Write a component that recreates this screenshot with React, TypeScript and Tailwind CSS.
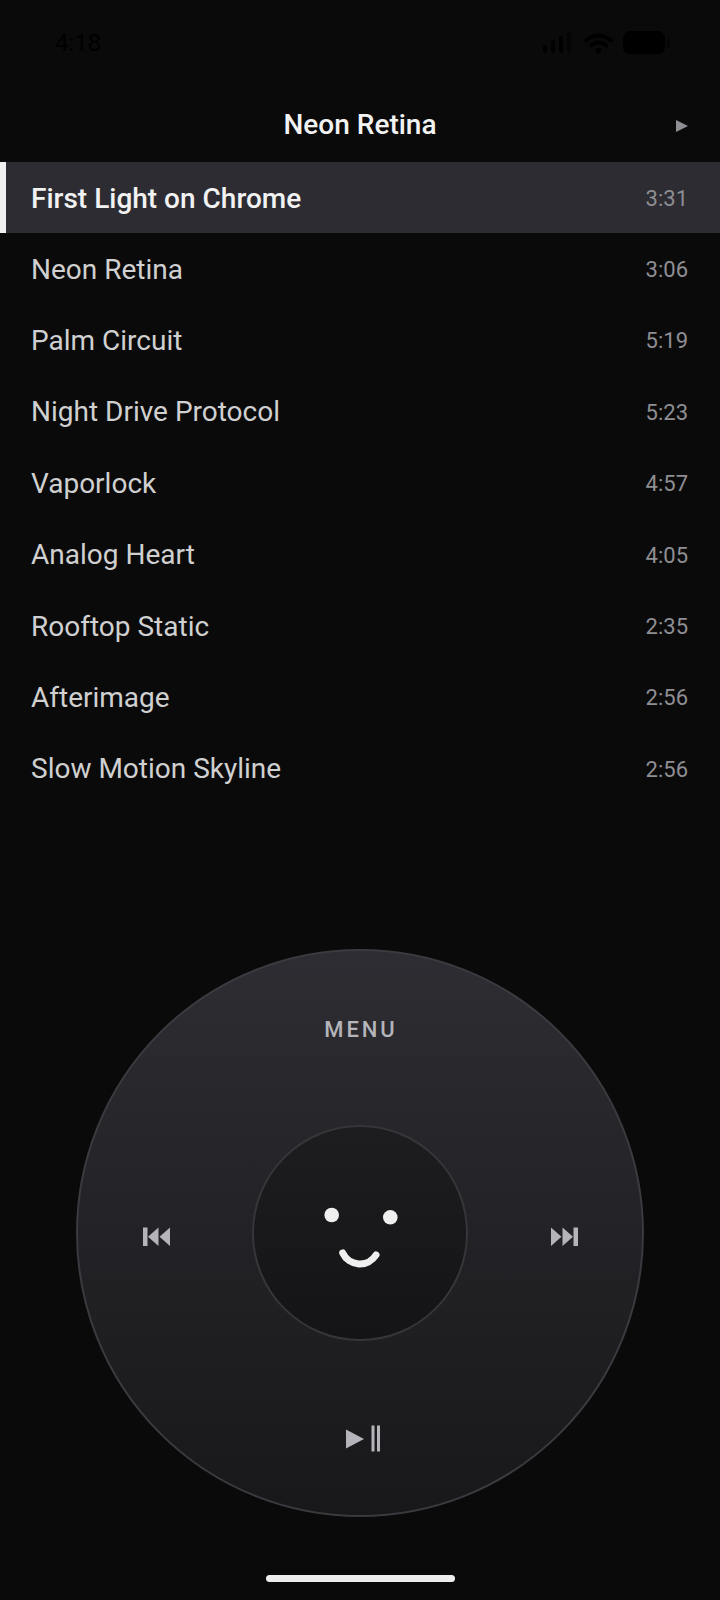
import React from "react";

const tracks: [string, string][] = [
  ["First Light on Chrome", "3:31"],
  ["Neon Retina", "3:06"],
  ["Palm Circuit", "5:19"],
  ["Night Drive Protocol", "5:23"],
  ["Vaporlock", "4:57"],
  ["Analog Heart", "4:05"],
  ["Rooftop Static", "2:35"],
  ["Afterimage", "2:56"],
  ["Slow Motion Skyline", "2:56"],
];

function StatusIcons() {
  return (
    <svg width="130" height="26" viewBox="0 0 130 26" fill="#000">
      <rect x="0" y="14" width="4" height="8" rx="2" />
      <rect x="8" y="9" width="4" height="13" rx="2" />
      <rect x="16" y="5" width="4" height="17" rx="2" />
      <rect x="24" y="0" width="4" height="22" rx="2" opacity="0.45" />
      <path d="M43 9.5a19 19 0 0 1 25 0M48 14.5a11 11 0 0 1 15 0" fill="none" stroke="#000" strokeWidth="4" strokeLinecap="round" />
      <circle cx="55.5" cy="19.5" r="2.8" />
      <rect x="80" y="0" width="42" height="23" rx="7" />
      <rect x="124" y="7" width="2.5" height="10" rx="1.2" opacity="0.6" />
    </svg>
  );
}

function Prev() {
  return (
    <svg width="28" height="20" viewBox="0 0 28 20" fill="#b4b4ba">
      <rect x="0" y="0.5" width="4.5" height="18.5" />
      <path d="M5 9.75 15.5 0.5v18.5zM16.5 9.75 27 0.5v18.5z" />
    </svg>
  );
}

function Next() {
  return (
    <svg width="28" height="20" viewBox="0 0 28 20" fill="#b4b4ba">
      <path d="M0 0.5 10.5 9.75 0 19zM11.5 0.5 22 9.75 11.5 19z" />
      <rect x="22.5" y="0.5" width="4.5" height="18.5" />
    </svg>
  );
}

function PlayPause() {
  return (
    <svg width="36" height="28" viewBox="0 0 36 28" fill="#b4b4ba">
      <path d="M0 4.5 18 14 0 23.5z" />
      <rect x="25.5" y="0.5" width="3" height="26" />
      <rect x="31" y="0.5" width="3" height="26" />
    </svg>
  );
}

export default function App() {
  return (
    <div className="flex h-[1600px] w-[720px] flex-col overflow-hidden bg-[#0a0a0b] font-['Roboto',sans-serif]">
      <div className="flex h-[84px] items-center justify-between pl-[55px] pr-[47px] pt-[4px]">
        <span className="pb-[3px] text-[24px] text-black">4:18</span>
        <StatusIcons />
      </div>
      <div className="relative flex h-[78px] items-center justify-center pt-[3px]">
        <span className="text-[28px] font-medium text-[#f2f2f2]">Neon Retina</span>
        <svg className="absolute right-[32px] top-[36px]" width="12" height="12" viewBox="0 0 12 12" fill="#8e8e93">
          <path d="M0 0 12 6 0 12z" />
        </svg>
      </div>
      <div className="flex flex-col">
        {tracks.map(([name, time], i) => (
          <div
            key={name}
            className={
              i === 0
                ? "flex h-[71.4px] items-center justify-between border-l-[6px] border-[#f0f0f0] bg-[#2c2c32] pl-[25px] pr-[32px] pt-[2px]"
                : "flex h-[71.4px] items-center justify-between pl-[31px] pr-[32px] pt-[1px]"
            }
          >
            <span className={i === 0 ? "text-[28px] font-medium text-[#f2f2f2]" : "text-[28px] text-[#d0d0d0]"}>{name}</span>
            <span className="text-[22px] text-[#8e8e93]">{time}</span>
          </div>
        ))}
      </div>
      <div className="relative mx-auto mt-[144px] flex h-[568px] w-[568px] items-center justify-center rounded-full border-2 border-[#3a3a3f] bg-gradient-to-b from-[#2e2d33] to-[#18181a]">
        <span className="absolute left-0 right-0 top-[62px] pl-[2px] text-center text-[22px] font-medium tracking-[2.9px] text-[#b4b4ba]">MENU</span>
        <div className="absolute left-[65px] top-[276px]"><Prev /></div>
        <div className="absolute right-[63px] top-[276px]"><Next /></div>
        <div className="absolute left-[268px] top-[474px]"><PlayPause /></div>
        <div className="flex h-[216px] w-[216px] items-center justify-center rounded-full border-2 border-[#36363a] bg-gradient-to-b from-[#1d1d20] to-[#141416]">
          <svg width="100" height="100" viewBox="0 0 100 100">
            <circle cx="21.7" cy="32" r="7.3" fill="#efefef" />
            <circle cx="80.3" cy="34.3" r="7.3" fill="#efefef" />
            <path d="M32.7 70A19 19 0 0 0 66 72" fill="none" stroke="#efefef" strokeWidth="7" strokeLinecap="round" />
          </svg>
        </div>
      </div>
      <div className="mx-auto mt-[58px] h-[7px] w-[189px] rounded-full bg-[#ededed]" />
    </div>
  );
}
